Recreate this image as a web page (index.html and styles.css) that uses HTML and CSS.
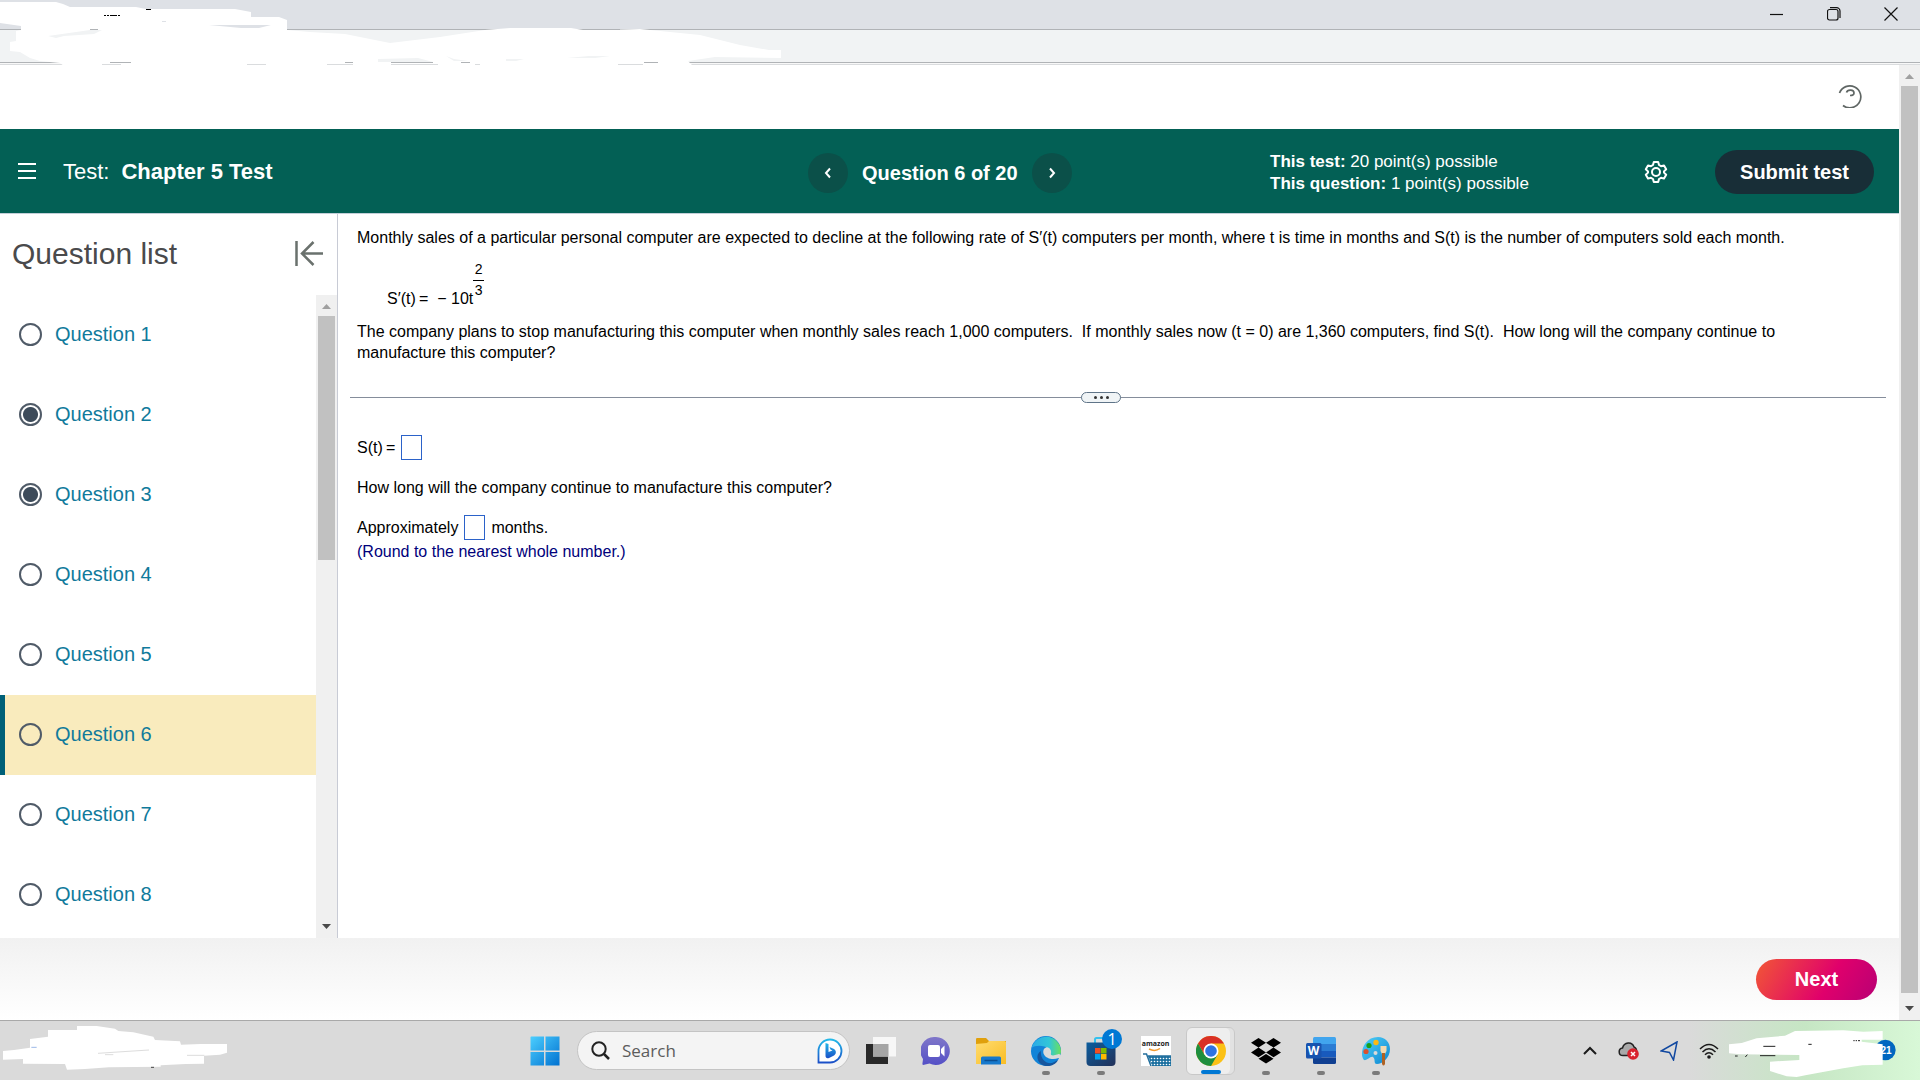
FILE: index.html
```
<!DOCTYPE html>
<html lang="en">
<head>
<meta charset="utf-8">
<title>Chapter 5 Test</title>
<meta name="viewport" content="width=device-width,initial-scale=1">
<link rel="stylesheet" href="styles.css">
</head>
<body>

<!-- ====================== WINDOW CHROME ====================== -->
<div class="chrome">
  <div class="titlebar">
    <button class="win-btn" aria-label="Minimize"><svg width="14" height="14" viewBox="0 0 14 14"><path d="M0 7.5h13"/></svg></button>
    <button class="win-btn" aria-label="Restore"><svg width="14" height="14" viewBox="0 0 14 14"><rect x=".5" y="2.5" width="10.5" height="10.5" rx="2"/><path d="M3 .6h6.5a3.500 3.500 0 0 1 3.500 3.500V11"/></svg></button>
    <button class="win-btn" aria-label="Close"><svg width="14" height="14" viewBox="0 0 14 14"><path d="M.5 .5l13 13M13.500 .5l-13 13"/></svg></button>
  </div>
  <div class="toolbar"></div>
  <svg class="smudge" width="800" height="66" viewBox="0 0 800 66" aria-hidden="true">
    <path fill="#fff" d="M0 2h56l7 2 7 3 66 0 10 2h89l16 3v5h28l8 3v10l23 2 35 2 45 9 50-6 45-7 25-2h61l12 2 25 0 32-1 20 2 40 4 40 10 29 5h12v8l-66-1-27 4 5 5H64l-4-3-20-2-10-3-10-6-10-1V42l6-1V31l5-1v-4L0 23z"/>
    <path fill="#dee1e6" d="M209 25h62l-12 3h-18zM162 21h4v1h-4z"/>
    <path fill="#f1f3f4" d="M48 36l42-6h12l-8 4-30 2-8 2zM378 59l40-1 15 4H378zM446 56l8 3 14 2-14 0zM567 58l22-2h21l-15 2zM506 59h18l-8 2h-10z"/>
    <path stroke="#b0b3b6" d="M90 29.500h8M583 29.500h37M110 62.500h21M345 62.500h8M391 62.500h42M461 62.500h9M644 62.500h14"/>
    <path stroke="#dadcde" d="M102 64.500h19M247 64.500h19M327 64.500h26M391 64.500h47M475 64.500h5M618 64.500h25"/>
    <path stroke="#000" d="M104 15.500h2m1 0h2m1 0h7m1 0h2M146 9.500h5"/>
  </svg>
</div>

<!-- ====================== PAGE ====================== -->
<div class="viewport">
  <div class="page">
    <div class="topbar">
      <button class="help" aria-label="Help"><svg width="24" height="24" viewBox="0 0 24 24"><path d="M1.500 9A11 11 0 1 1 5 21.500M8.500 8.500c1-3.500 7.500-3 7.500.5 0 2-1.500 2.500-4 2.500"/></svg></button>
    </div>

    <header class="test-header">
      <div class="test-name">
        <button class="menu" aria-label="Menu"><svg width="20" height="18" viewBox="0 0 20 18"><path d="M1 2h18M1 9h18M1 16h18"/></svg></button>
        <span>Test:</span><strong>Chapter 5 Test</strong>
      </div>
      <nav class="pager">
        <button class="round" aria-label="Previous question"><svg width="8" height="12" viewBox="0 0 8 12"><path d="M6 1.500L2 6l4 4.500"/></svg></button>
        <strong>Question 6 of 20</strong>
        <button class="round" aria-label="Next question"><svg width="8" height="12" viewBox="0 0 8 12"><path d="M2 1.500L6 6l-4 4.500"/></svg></button>
      </nav>
      <div class="status">
        <div class="points"><b>This test:</b> 20 point(s) possible<br><b>This question:</b> 1 point(s) possible</div>
        <div class="actions">
          <button class="gear" aria-label="Settings"><svg width="24" height="24" viewBox="0 0 24 24"><path d="M9.800 2h4.400l.8 3 2 1.200 3-.8 2.200 3.800L20 11.400v1.200l2.200 2.200-2.200 3.800-3-.8-2 1.200-.8 3H9.800L9 19l-2-1.200-3 .8-2.200-3.800L4 12.600v-1.200L1.800 9.200 4 5.400l3 .8L9 5z"/><circle cx="12" cy="12" r="4"/></svg></button>
          <button class="submit">Submit test</button>
        </div>
      </div>
    </header>

    <div class="main">
      <aside class="sidebar">
        <div class="sidebar-head">
          <h2>Question list</h2>
          <button aria-label="Collapse list"><svg width="28" height="26" viewBox="0 0 28 26"><path d="M1.500 0v25M28 12.500H7M18.500 1L7 12.500 18.500 24"/></svg></button>
        </div>
        <div class="list-wrap">
          <ul class="questions">
            <li><input type="radio" name="q1" aria-label="Question 1 status"><a href="#">Question 1</a></li>
            <li><input type="radio" name="q2" aria-label="Question 2 status" checked><a href="#">Question 2</a></li>
            <li><input type="radio" name="q3" aria-label="Question 3 status" checked><a href="#">Question 3</a></li>
            <li><input type="radio" name="q4" aria-label="Question 4 status"><a href="#">Question 4</a></li>
            <li><input type="radio" name="q5" aria-label="Question 5 status"><a href="#">Question 5</a></li>
            <li class="current"><input type="radio" name="q6" aria-label="Question 6 status"><a href="#">Question 6</a></li>
            <li><input type="radio" name="q7" aria-label="Question 7 status"><a href="#">Question 7</a></li>
            <li><input type="radio" name="q8" aria-label="Question 8 status"><a href="#">Question 8</a></li>
          </ul>
          <div class="scrollbar list-bar">
            <i class="up"></i><div class="thumb"></div><i class="down"></i>
          </div>
        </div>
      </aside>

      <section class="content">
        <div class="problem">
          <p>Monthly sales of a particular personal computer are expected to decline at the following rate of S′(t) computers per month, where t is time in months and S(t) is the number of computers sold each month.</p>
          <div class="equation">S′(t)&thinsp;=&nbsp; − 10t<span class="frac"><span>2</span><span>3</span></span></div>
          <p>The company plans to stop manufacturing this computer when monthly sales reach 1,000 computers.&nbsp; If monthly sales now (t = 0) are 1,360 computers, find S(t).&nbsp; How long will the company continue to manufacture this computer?</p>
        </div>
        <div class="divider"><button aria-label="Resize"><i></i><i></i><i></i></button></div>
        <div class="answer">
          <div class="row"><label for="st">S(t)&thinsp;=</label><input id="st" type="text"></div>
          <div class="row">How long will the company continue to manufacture this computer?</div>
          <div class="row"><label for="months">Approximately</label><input id="months" type="text"><span>months.</span></div>
          <p class="hint">(Round to the nearest whole number.)</p>
        </div>
      </section>
    </div>

    <footer class="footer"><button class="next">Next</button></footer>
  </div>
  <div class="scrollbar page-bar">
    <i class="up"></i><div class="thumb"></div><i class="down"></i>
  </div>
</div>

<!-- ====================== TASKBAR ====================== -->
<div class="taskbar">
  <svg width="230" height="59" viewBox="0 1023 690 177" aria-hidden="true">
    <path fill="#fff" d="M9 1113l33-3 48-7v-26l54-7v-20h87v-12h59l55 8 10 7 45 4 60 13 5 10 75 4 3 10 59-2h79v26l-21 6-48 3v24l-55 1-75 4v4l-155 2-72 5-54 2-6-17-126-1v-14l-60 2z"/>
    <path stroke="#ddd" stroke-width="3" fill="none" d="M294 1120l75-5 78-5M561 1126h52M315 1124h25"/>
    <path stroke="#9db9e8" stroke-width="3" d="M94 1102h16"/><path stroke="#444" stroke-width="3" d="M453 1162h9"/>
  </svg>

  <div class="apps">
    <button class="app" aria-label="Start"><svg width="30" height="30" viewBox="0 0 30 30">
      <defs><linearGradient id="win" x1="0" y1="0" x2="30" y2="30" gradientUnits="userSpaceOnUse"><stop offset="0" stop-color="#4dd0ff"/><stop offset="1" stop-color="#0070d0"/></linearGradient></defs>
      <path fill="url(#win)" d="M1 .5h13v14H.5V1zM15.500 .5h14v14h-14zM.5 16h13.500v13.500H.5zM15.500 16h14v13.500h-14z"/></svg></button>

    <div class="search">
      <svg width="19" height="19" viewBox="0 0 19 19"><circle cx="8" cy="8" r="6.700" fill="none" stroke="#222" stroke-width="2"/><path d="M13 13l5 5" stroke="#222" stroke-width="2.500"/></svg>
      <input type="text" placeholder="Search" aria-label="Search">
      <svg width="26" height="26" viewBox="0 0 26 26">
        <defs><linearGradient id="bing" x1="0" y1="0" x2="0" y2="1"><stop offset="0" stop-color="#22b8e8"/><stop offset="1" stop-color="#1b50c8"/></linearGradient></defs>
        <path d="M1.500 24.500V13A11.500 11.500 0 1 1 13 24.500z" fill="#fff" stroke="url(#bing)" stroke-width="1.800"/>
        <path d="M8.500 5l3 1v8l4-1.500-2-1-1-2.500 4.500 2c2.500 1.500 2.500 5 0 6.500l-5 2.500q-3.500 1-3.500-2.500z" fill="url(#bing)"/></svg>
    </div>

    <button class="app" aria-label="Task view"><svg width="30" height="30" viewBox="0 0 30 30"><path fill="#292929" d="M0 8h22v20H0z"/><path fill="#f7f7f7" d="M7 1h23v19.500H7z"/><path fill="#a5a5a5" d="M7 8h15.500v12.500H7z"/></svg></button>

    <button class="app" aria-label="Chat"><svg width="30" height="30" viewBox="0 0 30 30">
      <defs><linearGradient id="chat" x1="0" y1="0" x2="0" y2="1"><stop offset="0" stop-color="#8077c9"/><stop offset="1" stop-color="#5450c6"/></linearGradient></defs>
      <path fill="url(#chat)" d="M15 1a14 14 0 1 1-6.500 26.500L2 29c-1-.5-.5-1 0-6A14 14 0 0 1 15 1z"/><rect x="7" y="9" width="12" height="12" rx="2" fill="#fff"/><path fill="#fff" d="M20 13l3.500-3.500v11L20 17z"/></svg></button>

    <button class="app" aria-label="File Explorer"><svg width="30" height="30" viewBox="0 0 30 30">
      <defs><linearGradient id="fold" x1="0" y1="0" x2="1" y2="1"><stop offset="0" stop-color="#ffdc70"/><stop offset="1" stop-color="#f9bd25"/></linearGradient></defs>
      <path fill="#e0a00c" d="M0 8V3.500C0 2 .5 2 1.500 2H10l3 3h17v4z"/><path fill="url(#fold)" d="M0 8l11-1 2-2h15.500L30 6v22H0z"/><path fill="#1779cc" d="M5 28.500V22q0-1.500 1.500-1.500h17Q25 20.500 25 22v6.500z"/><path stroke="#0b4e91" stroke-width="1.500" d="M8.500 24.500h13"/></svg></button>

    <button class="app open" aria-label="Edge"><svg width="30" height="30" viewBox="0 0 30 30">
      <defs><linearGradient id="edge" x1="0" y1="0" x2="1" y2="0"><stop offset="0" stop-color="#2aa9e8"/><stop offset=".6" stop-color="#31c6d8"/><stop offset="1" stop-color="#6be05c"/></linearGradient></defs>
      <circle cx="15" cy="15" r="15" fill="#1284d8"/><path fill="url(#edge)" d="M.5 12A15 15 0 0 1 30 15c0 5-4 7-8 7-3 0-4-1.500-3.500-3 1-2 .5-7-5-8.500C8 9 3 10 .5 12z"/>
      <path fill="#16569e" d="M10 15c-1 8 5 13 11 12l6-3C23 32 10 32 7 24c-1.500-4 0-7.500 3-9z"/><path fill="#dadada" d="M15 11.500c-2.500 1-3.500 4-2 7 2 4 9 6 14.500 3.500l1.500 2 1-5-2-1-6 1.500c-2 0-2.500-1-2-2.500.8-2-1.500-6.500-5-5.500z"/></svg></button>

    <button class="app open" aria-label="Store"><svg width="30" height="30" viewBox="0 0 30 30">
      <defs><linearGradient id="store" x1="0" y1="0" x2="1" y2="1"><stop offset="0" stop-color="#0b5d9e"/><stop offset="1" stop-color="#233159"/></linearGradient></defs>
      <path fill="none" stroke="#35c1ee" stroke-width="2" d="M9 7V3.500Q9 2 10.500 2H20"/><path fill="url(#store)" d="M.5 6.500h29V26q0 4-4 4h-21q-4 0-4-4z"/>
      <path fill="#f25022" d="M9 12h5.500v5.500H9z"/><path fill="#7fba00" d="M15 12h5.500v5.500H15z"/><path fill="#00a4ef" d="M9 18h5.500v5.500H9z"/><path fill="#ffb900" d="M15 18h5.500v5.500H15z"/></svg><span class="badge">1</span></button>

    <button class="app" aria-label="Amazon"><span class="amazon"><b>amazon</b><svg width="30" height="18" viewBox="0 0 30 18">
      <defs><pattern id="mesh" width="3" height="3" patternUnits="userSpaceOnUse"><path fill="#1c70a0" d="M0 0h3v3H0z"/><circle cx="1.500" cy="1.500" r=".8" fill="#fff"/></pattern></defs>
      <path d="M8 1q6 3 11-.5" fill="none" stroke="#f29a2e" stroke-width="1.500"/><path fill="url(#mesh)" d="M7 8h23v10H11z"/><path d="M2 6h3.500L10 18M7 8h23" fill="none" stroke="#236f9d" stroke-width="1.500"/></svg></span></button>

    <button class="app open active" aria-label="Chrome"><svg width="30" height="30" viewBox="0 0 30 30">
      <circle cx="15" cy="15" r="15" fill="#fbc116"/><path fill="#d93025" d="M2 7.500A15 15 0 0 1 28 7.500H15L8.500 18.500z"/><path fill="#1e8e3e" d="M2 7.500l6.500 11.300 13 0L15 30A15 15 0 0 1 2 7.500z"/>
      <circle cx="15" cy="15" r="7.500" fill="#fff"/><circle cx="15" cy="15" r="5.800" fill="#2f73e0"/></svg></button>

    <button class="app open" aria-label="Dropbox"><svg width="30" height="26" viewBox="0 0 30 26"><path d="M7.500 0L15 4.800 7.500 9.600 0 4.800zM22.500 0L30 4.800l-7.500 4.800L15 4.800zM7.500 9.600l7.500 4.800-7.500 4.800L0 14.400zM22.500 9.600l7.500 4.800-7.500 4.800-7.500-4.800zM15 16l7.500 4.800L15 25.600l-7.500-4.800z"/></svg></button>

    <button class="app open" aria-label="Word"><svg width="30" height="30" viewBox="0 0 30 30">
      <path fill="#41a5ee" d="M7 2.500Q7 1 8.500 1h20Q30 1 30 2.500V8H7z"/><path fill="#2b7cd3" d="M7 8h23v7H7z"/><path fill="#185abd" d="M7 15h23v6.500H7z"/><path fill="#103f91" d="M7 21.500h23v5Q30 28 28.500 28h-20Q7 28 7 26.500z"/>
      <rect y="7" width="15.500" height="15.500" rx="1.500" fill="#1853af"/><text x="7.500" y="19" text-anchor="middle" class="word-w">W</text></svg></button>

    <button class="app open" aria-label="Paint"><svg width="30" height="30" viewBox="0 0 30 30">
      <defs><linearGradient id="pnt" x1="0" y1="0" x2="1" y2="1"><stop offset="0" stop-color="#4fd1fa"/><stop offset="1" stop-color="#0e86d0"/></linearGradient></defs>
      <path fill="url(#pnt)" d="M17 1c7 0 12 5 12 12 0 9-8 15-13 15-4 0-1-5-4-7-3-1-6 4-9 3C-2 19 2 1 17 1z"/>
      <circle cx="15" cy="6.500" r="2.700" fill="#fdb912"/><circle cx="8" cy="9.500" r="2.600" fill="#15a01b"/><circle cx="5" cy="15.500" r="2.600" fill="#d8502c"/><circle cx="14.500" cy="17" r="2" fill="#dadada"/>
      <path fill="#f3d9b0" d="M19.500 10h6v5l-1.500 3h-3l-1.500-3z"/><path fill="#ae6224" d="M21 17h3v11q-1.500 3-3 0z"/></svg></button>
  </div>

  <div class="tray">
    <svg width="14" height="9" viewBox="0 0 14 9"><path d="M1 8l6-6 6 6" fill="none" stroke="#1b1b1b" stroke-width="2"/></svg>
    <svg width="21" height="20" viewBox="0 0 21 20"><path d="M5 14.500C0 14.500 0 7.500 4.500 7 6 1 14 0 16 6c3 1 4 7 0 8.500z" fill="#a9a9a9" stroke="#222" stroke-width="1.500"/><circle cx="15" cy="13" r="5.800" fill="#d9232e"/><path d="M13 11l4 4m0-4l-4 4" stroke="#fff" stroke-width="1.500"/></svg>
    <svg width="18" height="20" viewBox="0 0 18 20"><path d="M17 1L1 10l8.500 1.500L13.500 19z" fill="none" stroke="#1148a0" stroke-width="1.500"/></svg>
    <svg width="20" height="16" viewBox="0 0 20 16"><g fill="none" stroke="#1b1b1b" stroke-width="1.500"><path d="M1 6q9-9 18 0M3.500 9q6.500-6.500 13 0M6 11.800q4-4 8 0"/></g><circle cx="10" cy="14" r="1.800" fill="#1b1b1b"/></svg>
    <svg width="192" height="59" viewBox="504 18 576 177">
      <circle cx="976" cy="105" r="31" fill="#0067c0"/><text x="978" y="116" text-anchor="middle" class="count">21</text>
      <path fill="#fff" d="M507 88l38-4 45-14 85-8 30-14 145-2 60 4 58-2v26h-63v6l63 8v61l-61 2-57 9-110 20-30 6-30-2-50-16v-28l88-5v-15l-178-2-33-3z"/>
      <path stroke="#222" stroke-width="3" fill="none" d="M610 94h36M600 122h46M525 123h8M556 126l6-7M745 88h10M880 77h4m3 0h4m3 0h6"/></svg>
  </div>
</div>

</body>
</html>
```
FILE: styles.css
```
/* ---------- Base ---------- */
*{margin:0;padding:0;box-sizing:border-box}
html,body{height:100%}
body{display:flex;flex-direction:column;overflow:hidden;background:#fff;color:#000;font:16px/21px "Liberation Sans",Arial,sans-serif}
button{border:0;background:none;color:inherit;font:inherit;cursor:pointer;display:flex;align-items:center;justify-content:center}
svg{display:block;flex:none}
/* ---------- Window chrome ---------- */
.chrome{position:relative;flex:none}
.titlebar{height:30px;background:#dee1e6;border-bottom:1px solid #b0b3b6;display:flex;justify-content:flex-end;padding-right:1px}
.win-btn{width:57px;height:27px}
.win-btn svg{fill:none;stroke:#111;stroke-width:1.2}
.toolbar{height:35px;background:#f1f3f4;border-bottom:1px solid #dadcde;box-shadow:inset 0 -1px #f8f8f8,inset 0 -2px #b0b3b6}
.smudge{position:absolute;left:0;top:0;fill:none}
/* ---------- Page frame ---------- */
.viewport{flex:1;min-height:0;display:flex}
.page{flex:1;min-width:0;display:flex;flex-direction:column}
.topbar{height:64px;flex:none;display:flex;justify-content:flex-end;align-items:center;padding:0 37px 2px}
.help svg{fill:none;stroke:#5f6664;stroke-width:1.7}
/* ---------- Header ---------- */
.test-header{flex:none;height:85px;background:#036055;border-bottom:1px solid #c3cfd8;color:#fff;display:grid;grid-template-columns:808fr 462fr 629fr;align-items:center}
.test-name{display:flex;align-items:center;font-size:22px;padding-left:17px}
.test-name span{margin:0 12px 0 26px}
.menu svg{stroke:#fff;stroke-width:2}
.pager{display:flex;align-items:center;gap:14px;font-size:20px;padding-top:4px}
.round{width:40px;height:40px;border-radius:50%;background:#0b5049}
.round svg{fill:none;stroke:#fff;stroke-width:2}
.status{display:flex;align-items:center;justify-content:space-between;padding-right:25px}
.points{font-size:17px;line-height:22px;padding-top:4px}
.actions{display:flex;align-items:center;gap:47px;padding-top:2px}
.gear svg{fill:none;stroke:#fff;stroke-width:2;stroke-linejoin:round}
.submit{width:159px;height:44px;border-radius:22px;background:#182e37;font-size:20px;font-weight:bold}
/* ---------- Sidebar ---------- */
.main{flex:1;min-height:0;display:flex}
.sidebar{width:338px;flex:none;border-right:1px solid #c8cbd5;display:flex;flex-direction:column}
.sidebar-head{height:81px;flex:none;display:flex;justify-content:space-between;align-items:center;padding:0 14px 2px 12px}
.sidebar-head h2{font-size:30px;line-height:36px;font-weight:normal;color:#4a4a4c}
.sidebar-head svg{fill:none;stroke:#6a716d;stroke-width:2.5}
.list-wrap{flex:1;min-height:0;display:flex}
.questions{flex:1;list-style:none;overflow:hidden}
.questions li{height:80px;display:flex;align-items:center;gap:13px;padding:0 0 2px 19px}
.questions .current{background:#f9ebbd;border-left:5px solid #006078;padding-left:14px}
.questions input{appearance:none;width:23px;height:23px;border:2px solid #505b68;border-radius:50%}
.questions input:checked{background:radial-gradient(#3d4b5a 7px,transparent 8px)}
.questions a{font-size:20px;color:#107a9b;text-decoration:none}
/* ---------- Scrollbars ---------- */
.scrollbar{width:21px;flex:none;background:#f0f0f0;display:flex;flex-direction:column;align-items:center}
.scrollbar .thumb{width:17px;background:#c1c1c1;flex-shrink:0}
.scrollbar i{width:9px;height:5px;flex:none;background:#a0a0a0;margin:9px 0 7px;clip-path:polygon(50% 0,100% 100%,0 100%)}
.scrollbar .down{background:#4a4a4a;margin:auto 0 9px;clip-path:polygon(0 0,100% 0,50% 100%)}
.list-bar .thumb{height:38%}
.page-bar .thumb{height:95%}
/* ---------- Problem ---------- */
.content{flex:1;min-width:0;padding:12px 13px 0 12px}
.problem{padding:1px 70px 0 7px;height:171px}
.problem p{margin-bottom:14px}
.equation{padding-left:30px;height:47px;margin-bottom:12px;display:flex;align-items:flex-end}
.frac{display:flex;flex-direction:column;font-size:14px;line-height:18px;margin-bottom:10px;text-align:center}
.frac span{width:11px}
.frac span:first-child{border-bottom:1px solid #000;line-height:22px}
.divider{height:1px;background:#858d9b;display:flex;align-items:center;justify-content:center;padding-right:34px}
.divider button{width:40px;height:11px;flex:none;background:#f0f4f6;border:1px solid #5f7488;border-radius:6px;gap:3px}
.divider i{width:3px;height:3px;border-radius:50%;background:#333}
.answer{padding:29px 7px}
.row{height:40px;display:flex;align-items:center}
.row input{width:21px;height:25px;border:1px solid #2b62c9;margin:0 6px;font:inherit}
.hint{color:#00007b;margin-top:-6px}
/* ---------- Footer ---------- */
.footer{height:82px;flex:none;background:linear-gradient(#f1f1f1,#fff);display:flex;justify-content:flex-end;align-items:center;padding-right:22px}
.next{width:121px;height:41px;border-radius:21px;background:linear-gradient(120deg,#f0503a 5%,#e0006c 60%,#b80074);color:#fff;font-size:20px;font-weight:bold}
/* ---------- Taskbar ---------- */
.taskbar{flex:none;height:60px;border-top:1px solid #a9a9a9;background:linear-gradient(90deg,#dadada 88%,#c6e6c4 94%,#d8f8d7);display:grid;grid-template-columns:1fr auto 1fr;align-items:center}
.apps{display:flex;align-items:center}
.app{width:55px;height:48px;position:relative}
.search{width:273px;height:39px;margin:0 3px 0 5px;padding:0 6px 0 13px;border:1px solid #c4c4c4;border-radius:20px;background:#f4f4f4;display:flex;align-items:center}
.search input{flex:1;min-width:0;border:0;background:none;outline:0;margin-left:12px;font:17px/24px "Open Sans","Noto Sans",sans-serif}
.search input::placeholder{color:#5c5c5c;opacity:1}
.open::after{content:"";position:absolute;bottom:0;left:24px;width:8px;height:4px;border-radius:2px;background:#7b7b7b}
.active{background:#eee;border:1px solid #c8c8c8;border-radius:6px;width:49px;margin:0 3px;box-shadow:inset -4px 0 #e2e2e2}
.active::after{left:14px;width:20px;background:#0078d4}
.badge{position:absolute;left:29px;top:2px;width:20px;height:20px;border-radius:50%;background:#0078d4;color:#fff;font:16px/20px "Open Sans",sans-serif}
.amazon{display:block;width:30px;height:30px;background:#fff}
.amazon b{display:block;font:bold 7px/12px "Open Sans",sans-serif;height:12px;padding-top:2px;color:#222}
.word-w{font:bold 12px "Open Sans",sans-serif;fill:#fff}
.tray{display:flex;align-items:center;justify-content:flex-end;gap:21px}
.tray svg:last-child{margin-left:-12px}
.count{font:bold 30px "Liberation Sans",sans-serif;fill:#fff}
```
